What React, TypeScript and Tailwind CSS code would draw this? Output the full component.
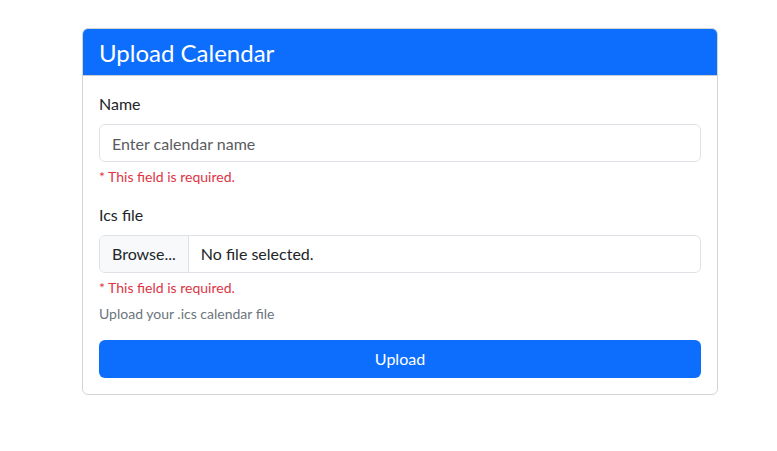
export default function App() {
  return (
    <div className="min-h-[451px] bg-white pt-[28px] pl-[82px] font-['Lato',sans-serif]">
      <div className="w-[636px] overflow-hidden rounded-[6px] border border-[#d3d4d5] bg-white">
        <div className="flex h-[47px] items-center border-b border-[#c9ccd0] bg-[#0d6efd] px-4">
          <h4 className="text-[24px] leading-[29px] font-normal text-white">Upload Calendar</h4>
        </div>
        <form className="p-4 text-[#212529]" onSubmit={(e) => e.preventDefault()}>
          <div className="mb-4">
            <label className="mb-2 block text-[16px] leading-6">Name</label>
            <input
              type="text"
              placeholder="Enter calendar name"
              className="block h-[38px] w-full rounded-[6px] border border-[#dee2e6] px-3 text-[16px] text-[#212529] placeholder:text-[#595c5f] outline-none"
            />
            <div className="mt-1 text-[14px] leading-[21px] text-[#dc3545]">* This field is required.</div>
          </div>
          <div className="mb-4">
            <label className="mb-2 block text-[16px] leading-6">Ics file</label>
            <div className="flex h-[38px] w-full overflow-hidden rounded-[6px] border border-[#dee2e6] text-[16px]">
              <span className="flex items-center border-r border-[#dee2e6] bg-[#f8f9fa] px-3">Browse...</span>
              <span className="flex items-center px-3">No file selected.</span>
            </div>
            <div className="mt-1 text-[14px] leading-[21px] text-[#dc3545]">* This field is required.</div>
            <div className="mt-[5px] text-[14px] leading-[21px] text-[#6c757d]">Upload your .ics calendar file</div>
          </div>
          <button
            type="submit"
            className="block h-[38px] w-full rounded-[6px] bg-[#0d6efd] text-[16px] text-white"
          >
            Upload
          </button>
        </form>
      </div>
    </div>
  );
}
